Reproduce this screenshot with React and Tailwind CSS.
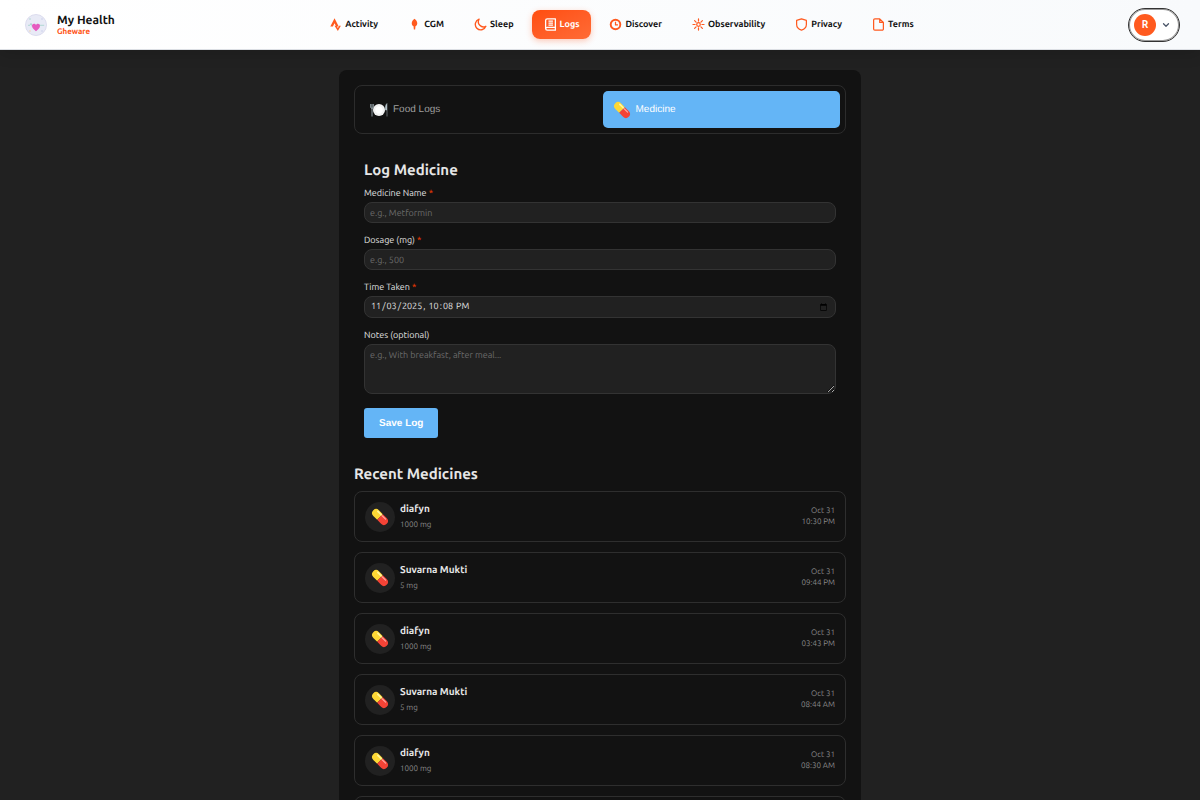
import { ChevronDown } from 'lucide-react';
import { useState } from 'react';
import clsx from 'clsx';

const ORANGE = '#ff5a1f';

const icons = {
    activity: (
        <g>
            <path d="M6.800 .2 1.600 10.400h3.200l2-4 2 4H12L6.800 .2Z" />
            <path d="M14.600 9.600h-2.200l-1.500 2.900-1.500-2.900H6.800L10.900 16Z" />
        </g>
    ),
    cgm: <path d="M8 .8c2 1.600 3.400 3.400 3.400 5.700 0 2-.9 3.200-2.200 3.700L8.800 14H7.200l-.4-3.800C5.500 9.700 4.600 8.500 4.600 6.500 4.600 4.200 6 2.400 8 .8Z" />,
    sleep: (
        <path d="M6.200 1.500A6.700 6.700 0 1 0 14.600 10.200 6.300 6.300 0 0 1 6.200 1.500Z" fill="none" stroke="currentColor" strokeWidth="1.700" strokeLinejoin="round" />
    ),
    logs: (
        <g fill="none" stroke="currentColor" strokeWidth="1.600">
            <path d="M14 11.500V1H4a2 2 0 0 0-2 2v10a2 2 0 0 0 2 2h10v-3.500H4a2 2 0 0 0-2 1.800" strokeLinejoin="round" />
            <path d="M5.500 3.800h5.500M5.500 6.300h5.500M5.500 8.800h5.500" />
        </g>
    ),
    discover: (
        <g fill="none" stroke="currentColor">
            <circle cx="8" cy="8" r="5.900" strokeWidth="2.400" />
            <path d="M8 4.500V8.500h3" strokeWidth="1.500" />
        </g>
    ),
    observability: (
        <g fill="none" stroke="currentColor" strokeWidth="1.500" strokeLinecap="round">
            <circle cx="8" cy="8" r="2.200" />
            <path d="M8 1.200v2.600M8 12.200v2.600M1.200 8h2.600M12.200 8h2.600M3.200 3.200l1.800 1.800M11 11l1.800 1.800M12.800 3.200 11 5M5 11l-1.800 1.800" />
        </g>
    ),
    privacy: (
        <path d="M8 1 14 3v5c0 3.500-2.600 5.800-6 7-3.400-1.200-6-3.500-6-7V3l6-2Z" fill="none" stroke="currentColor" strokeWidth="1.500" strokeLinejoin="round" />
    ),
    terms: (
        <path d="M9.500 1H3.500A1.500 1.500 0 0 0 2 2.500v11A1.500 1.500 0 0 0 3.500 15h9a1.500 1.500 0 0 0 1.500-1.500v-8L9.500 1v4.500H14" fill="none" stroke="currentColor" strokeWidth="1.500" strokeLinejoin="round" />
    ),
};

const navItems = [
    { id: 'activity', label: 'Activity' },
    { id: 'cgm', label: 'CGM' },
    { id: 'sleep', label: 'Sleep' },
    { id: 'logs', label: 'Logs' },
    { id: 'discover', label: 'Discover' },
    { id: 'observability', label: 'Observability' },
    { id: 'privacy', label: 'Privacy' },
    { id: 'terms', label: 'Terms' },
];

const medicines = [
    { name: 'diafyn', dose: '1000 mg', date: 'Oct 31', time: '10:30 PM' },
    { name: 'Suvarna Mukti', dose: '5 mg', date: 'Oct 31', time: '09:44 PM' },
    { name: 'diafyn', dose: '1000 mg', date: 'Oct 31', time: '03:43 PM' },
    { name: 'Suvarna Mukti', dose: '5 mg', date: 'Oct 31', time: '08:44 AM' },
    { name: 'diafyn', dose: '1000 mg', date: 'Oct 31', time: '08:30 AM' },
    { name: 'diafyn', dose: '1000 mg', date: 'Oct 30', time: '10:30 PM' },
];

const fieldClass = 'block w-full rounded-lg border border-[#333] bg-[#212121] px-[5px] text-[9px] text-[#e0e0e0] [text-rendering:geometricPrecision] placeholder:text-[#6b6b6b] focus:outline-none focus:border-[#64b5f6]';

function PillIcon() {
    return (
        <svg viewBox="0 0 18 18" className="size-[18px] shrink-0" aria-hidden="true">
            <g transform="rotate(45 9 9)">
                <path d="M9 5H3.500a4 4 0 0 0 0 8H9Z" fill="#fdd835" />
                <path d="M9 5h5.500a4 4 0 0 1 0 8H9Z" fill="#f44336" />
                <path d="M3.500 6.600H8.300" stroke="#fff59d" strokeWidth="1.600" strokeLinecap="round" />
                <path d="M10 6.600h4.500" stroke="#ffa8a0" strokeWidth="1.200" strokeLinecap="round" />
            </g>
        </svg>
    );
}

function PlateIcon() {
    return (
        <svg viewBox="0 0 18 18" className="size-[18px] shrink-0" aria-hidden="true">
            <circle cx="9" cy="9" r="6" fill="#f5f5f5" />
            <circle cx="9" cy="9" r="4.200" fill="#fff" stroke="#e4e4e4" strokeWidth=".5" />
            <path d="M.7 3v3.500c0 1 2.600 1 2.600 0V3M2 3v12.500" fill="none" stroke="#b0bec5" strokeWidth=".8" />
            <path d="M17 15.500V2.500c-1.600 1.200-1.900 4-1.700 6.500H17" fill="#b0bec5" stroke="#b0bec5" strokeWidth=".5" />
        </svg>
    );
}

function Logo() {
    return (
        <svg viewBox="0 0 22 22" className="size-[22px]" aria-hidden="true">
            <circle cx="11" cy="11" r="10.500" fill="#e8eaf6" stroke="#dcdcee" />
            <path d="M3 11.300h2l1-2 1.200 3 1-1h11" fill="none" stroke="#a9d6cf" strokeWidth=".9" />
            <path d="M11 17.300C8.500 15.200 7 13.800 7 11.800 7 10.500 8 9.700 9 9.700c.8 0 1.600.5 2 1.200.4-.7 1.200-1.200 2-1.200 1 0 2 .8 2 2.100 0 2-1.500 3.400-4 5.500Z" fill="#e65bc0" />
            <circle cx="5" cy="5" r=".7" fill="#a5d6c9" />
            <circle cx="17" cy="5" r=".7" fill="#c5cae9" />
            <circle cx="5" cy="17" r=".7" fill="#f5d0a0" />
            <circle cx="17" cy="17" r=".7" fill="#c5cae9" />
        </svg>
    );
}

function Header() {
    return (
        <header className="flex h-[50px] items-center justify-between border-b border-[#dcdfe4] bg-linear-to-r from-white to-[#f8fafc] pr-5 pl-[25px] shadow-[0_3px_16px_rgba(0,0,0,0.15)]">
            <a href="#home" className="flex items-center gap-2.5">
                <Logo />
                <span className="flex flex-col pt-px">
                    <span className="text-[12px] leading-[13px] font-semibold text-[#111]">My Health</span>
                    <span className="text-[8px] leading-[10px] font-semibold text-[#ff4d0d]">Gheware</span>
                </span>
            </a>
            <nav className="flex items-center gap-1.5">
                {navItems.map(item => (
                    <a
                        key={item.id}
                        href={`#${item.id}`}
                        className={clsx(
                            'flex h-[29px] items-center gap-[3px] rounded-lg px-3 text-[9px] font-bold',
                            item.id === 'logs'
                                ? 'bg-linear-to-br from-[#ff4d0d] to-[#ff6b35] text-white shadow-[0_2px_6px_rgba(255,80,20,0.3)]'
                                : 'text-[#111]'
                        )}
                    >
                        <svg viewBox="0 0 16 16" className="size-[13px]" fill="currentColor" color={item.id === 'logs' ? '#fff' : ORANGE} aria-hidden="true">
                            {icons[item.id]}
                        </svg>
                        {item.label}
                    </a>
                ))}
            </nav>
            <button aria-label="Account menu" className="flex h-[34px] w-[52px] items-center gap-[5px] rounded-full border border-[#333] bg-white pl-[5px] ring-1 ring-[#333]/50 ring-inset">
                <span className="flex size-[22px] items-center justify-center rounded-full bg-[#ff5a1f] text-[10px] font-bold text-white">R</span>
                <ChevronDown className="size-2.5 text-[#4a5568]" strokeWidth={3} />
            </button>
        </header>
    );
}

function Field({ id, label, required, children }) {
    return (
        <div className="mb-[11px]">
            <label htmlFor={id} className="mb-0.5 block text-[9px] leading-[13px] text-[#e0e0e0]">
                {label}{required && <span className="text-[#ff3d00]"> *</span>}
            </label>
            {children}
        </div>
    );
}

function MedicineItem({ item }) {
    return (
        <li className="flex h-[51px] items-center gap-[5px] rounded-lg border border-[#2e2e2e] px-2.5">
            <span className="flex size-[30px] shrink-0 items-center justify-center rounded-full bg-[#212121]">
                <PillIcon />
            </span>
            <div className="flex-1">
                <p className="text-[10px] leading-4 font-semibold text-[#e6e6e6]">{item.name}</p>
                <p className="text-[8px] leading-4 text-[#8a8a8a]">{item.dose}</p>
            </div>
            <div className="pb-0.5 text-right text-[8px] leading-[11px] text-[#8a8a8a]">
                <p>{item.date}</p>
                <p>{item.time}</p>
            </div>
        </li>
    );
}

export default function App() {
    const [tab, setTab] = useState('medicine');
    const [takenAt, setTakenAt] = useState('2025-11-03T22:08');

    const tabClass = id => clsx(
        "flex h-[37px] flex-1 items-center gap-[5px] rounded-[5px] px-2.5 font-['Liberation_Sans',sans-serif] text-[10px] [text-rendering:geometricPrecision]",
        tab === id ? 'bg-[#64b5f6] text-white' : 'text-[#9e9e9e]'
    );

    return (
        <div className="h-screen overflow-y-auto bg-[#212121] font-['Ubuntu','Noto_Sans',sans-serif] [scrollbar-width:none] [text-rendering:geometricPrecision]">
            <Header />
            <main className="mx-auto mt-5 max-w-[522px] rounded-lg bg-[#121212] p-[15px]">
                <div className="flex gap-[5px] rounded-lg border border-[#2c2c2c] p-[5px]">
                    <button onClick={() => setTab('food')} className={tabClass('food')}>
                        <PlateIcon /> Food Logs
                    </button>
                    <button onClick={() => setTab('medicine')} className={tabClass('medicine')}>
                        <PillIcon /> Medicine
                    </button>
                </div>

                <form className="mt-[25px] px-2.5" onSubmit={e => e.preventDefault()}>
                    <h2 className="mb-1.5 text-[15px] leading-[22px] font-semibold text-[#e6e6e6]">Log Medicine</h2>
                    <Field id="name" label="Medicine Name" required>
                        <input id="name" type="text" placeholder="e.g., Metformin" className={`${fieldClass} h-[21px]`} />
                    </Field>
                    <Field id="dosage" label="Dosage (mg)" required>
                        <input id="dosage" type="text" inputMode="numeric" placeholder="e.g., 500" className={`${fieldClass} h-[21px]`} />
                    </Field>
                    <Field id="taken" label="Time Taken" required>
                        <input id="taken" type="datetime-local" value={takenAt} onChange={e => setTakenAt(e.target.value)} className={`${fieldClass} h-[22px]`} />
                    </Field>
                    <Field id="notes" label="Notes (optional)">
                        <textarea id="notes" placeholder="e.g., With breakfast, after meal..." className={`${fieldClass} h-[50px] py-1`} />
                    </Field>
                    <button type="submit" className="mt-[3px] h-[30px] rounded-[3px] bg-[#64b5f6] px-[15px] font-['Liberation_Sans',sans-serif] text-[10px] font-bold text-white [text-rendering:geometricPrecision]">
                        Save Log
                    </button>
                </form>

                <section className="mt-[25px]">
                    <h2 className="mb-1.5 text-[15px] leading-[22px] font-semibold text-[#e6e6e6]">Recent Medicines</h2>
                    <ul className="flex flex-col gap-2.5">
                        {medicines.map(item => <MedicineItem key={item.date + item.time} item={item} />)}
                    </ul>
                </section>
            </main>
        </div>
    );
}
